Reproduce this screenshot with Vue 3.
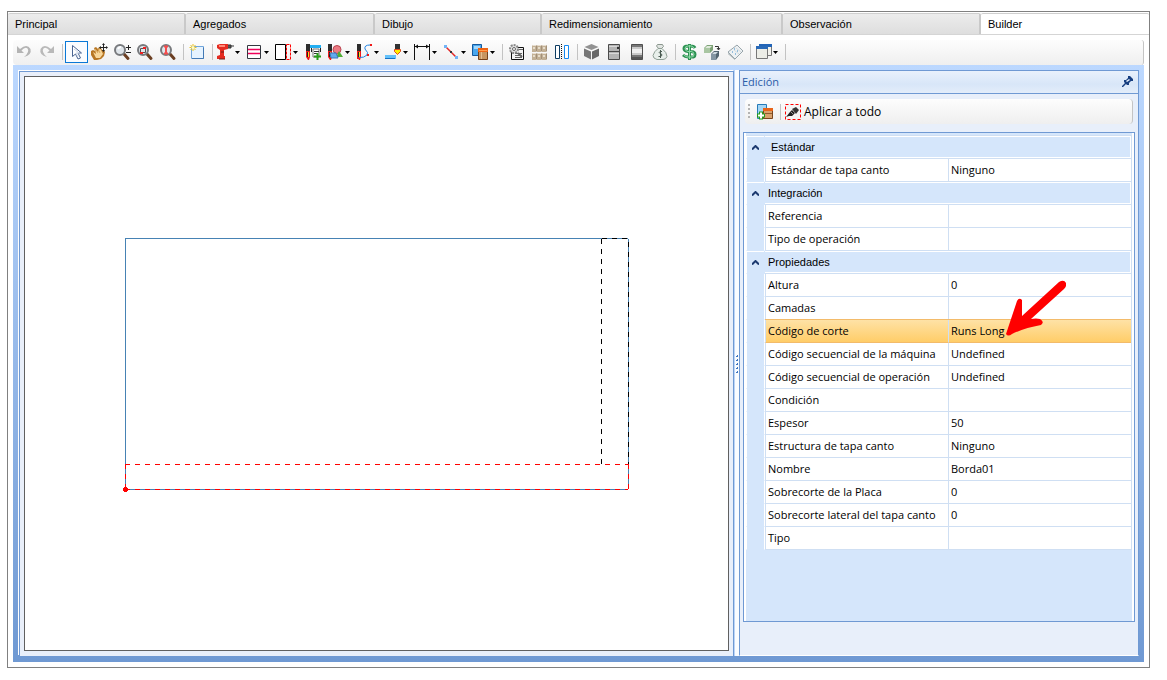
<script setup>
import { ref } from 'vue'

const tabs = [
  { label: 'Principal', size: 'w1' },
  { label: 'Agregados', size: 'w2' },
  { label: 'Dibujo', size: 'w3' },
  { label: 'Redimensionamiento', size: 'w4' },
  { label: 'Observación', size: 'w5' },
  { label: 'Builder', size: 'rest' },
]
const activeTab = ref('Builder')

const lens = (inner) =>
  `<path d="M10 11l4 4.500" stroke="#6b3f22" stroke-width="3" stroke-linecap="round"/><circle cx="6" cy="7" r="5" fill="#dfe5ea" stroke="#77797c" stroke-width="2"/>${inner}`
const cuboid = (x, y) =>
  `<path d="M${x} ${y + 1}l1-1h4v6l-1 1h-4z" fill="#a39078"/><path d="M${x} ${y + 1}h4v6h-4z" fill="#c2b095"/><path d="M${x} ${y + 1}l1-1h4l-1 1z" fill="#e9e0d2"/><path d="M${x + 1} ${y + 2}h2v2h-2z" fill="#e6dccb"/>`
const glue = '<path d="M1 1h4v7h-4z" fill="#2c2c2c"/><path d="M1 8h4v6l-1 3h-1l-2-3z" fill="#f01818"/><path d="M2 9h2v5h-2z" fill="#222"/><path d="M3 9h1v5h-1z" fill="#ffd21c"/>'

const icons = {
  undo: '<path d="M1 3v7h7l-2.500-2.500Q9 3.500 11.500 5.500Q14 9 8 14Q16 12 14.500 6Q11 0 4 6z" fill="#b4b4b4"/>',
  redo: '<path d="M15 3v7h-7l2.500-2.500Q7 3.500 4.500 5.500Q2 9 8 14Q0 12 1.500 6Q5 0 12 6z" fill="#b9b9b9"/>',
  pointer: '<path d="M4.500 2.500v11l3-2.500l2.500 5l2.500-1l-2.500-5h3.500z" fill="#fff" stroke="#4b6592"/><path d="M6 6l5 4h-3l2 4" stroke="#ccd6e7" fill="none"/>',
  hand: '<path d="M0 8l2-1l2 1l-1-3l2-1l2 2l1-2l2 1l1 2l2 0l1 2l-1 4l-3 3l-4 1h-3l-3-5z" fill="#b87724"/><path d="M2 9l3 2l-1-5l3 3l2-4l2 4l1 2l-3 4l-4 0z" fill="#f8d79b"/><path d="M4 6l3 4M7 6l2 4" stroke="#d8a75c"/><path d="M12.500 1v7M9 4.500h7" stroke="#222"/><path d="M11 2l1.500-2L14 2M11 7l1.500 2L14 7M15 3l2 1.500L15 6M10 3L8 4.500L10 6" fill="#222"/>',
  zoom: lens('<path d="M4 6q1-2 3-2" stroke="#fff" stroke-width="2" fill="none"/><path d="M12 4.500h5M14.500 2v5M12 9.500h5" stroke="#222"/>'),
  zoomBox: lens('<path d="M3.500 5.500h5v4h-5z" fill="none" stroke="#555"/><path d="M6 5h3M3 10h3" stroke="#f02020" stroke-width="2"/>'),
  zoomFit: lens('<path d="M6 3v8M4 3.500h4M4 10.500h4" stroke="#f54d4d" stroke-width="2"/>'),
  newDoc: '<path d="M2.500 3.500h12v12h-12z" fill="#e6f3ff" stroke="#70a6dd"/><path d="M3 15.500h11.500v-11" fill="none" stroke="#4379b4"/><path d="M4 1v7M.5 4.500h7M1.500 2l5 5M6.500 2l-5 5" stroke="#edc21d"/><circle cx="4" cy="4.500" r="1.500" fill="#fffbc8"/>',
  drill: '<path d="M0 2l3-1h8v5l-4 1v6h1v3h-8v-3l3-1v-5l-3-2z" fill="#e52b20"/><path d="M2 3h6" stroke="#ff8a78" stroke-width="2"/><path d="M11 2h3v3h-3M14 3h3" fill="#555" stroke="#333"/><path d="M4 9h3M2 16h6" stroke="#6e211b"/>',
  stripes: '<path d="M1.500 2.500h13v13h-13z" fill="#fff" stroke="#343840"/><path d="M2 6.500h12M2 10.500h12" stroke="#f0005a" stroke-width="1.500"/>',
  edge: '<path d="M.5 1.500h10v15h-10z" fill="#fff" stroke="#000"/><path d="M11.500 1.500h4v15h-4z" fill="none" stroke="#f00" stroke-dasharray="3 1"/>',
  gluePlus: glue + '<path d="M5 2h11v3H5z" fill="#22aef2"/><path d="M6.500 5v4M15.500 5v4" stroke="#222"/><path d="M8 6h6v8H8z" fill="#fff" stroke="#777"/><path d="M9 8.500h5M9 10.500h4" stroke="#333"/><path d="M9 13.500h7M12.500 10v7" stroke="#279c18" stroke-width="2"/>',
  glueShapes: glue + '<circle cx="10" cy="6.500" r="4" fill="#ec7a83" stroke="#b94450"/><path d="M9 14l3-6l4 6z" fill="#4fad35"/><path d="M3 10h6l2 5H4z" fill="#62aaf0" stroke="#3878bd"/>',
  glueCurve: glue + '<path d="M14 2q-6 0-5 4q4 4 2 6q-3 3-8 2.500" stroke="#2284e4" fill="none"/><path d="M14 1h2v2h-2zM11 11h2v2h-2zM1 14h2v2H1z" fill="#f01818"/>',
  spread: '<path d="M0 12h11v4H0z" fill="#64c1fa"/><path d="M0 15.500h10" stroke="#1671c4"/><path d="M10 1h5v5h-5z" fill="#333"/><path d="M9.500 6.500h6v2l-3 3l-3-3z" fill="#fff000" stroke="#e04b21"/>',
  dimension: '<path d="M.5 1v16M15.500 1v16M1 3.500h14" stroke="#111"/><path d="M1 3.500l3-2v4zM15 3.500l-3-2v4z" fill="#111"/>',
  line: '<path d="M3 4l10 10" stroke="#e32828" stroke-width="1.500"/><path d="M7 8h2v2H7z" fill="#333"/><path d="M1 2h3v3H1zM12 13h3v3h-3z" fill="#72b4f6"/>',
  panels: '<path d="M.5 1.500h9v11h-9z" fill="#4aa7ee" stroke="#165a9e"/><path d="M2 3h6v3H2z" fill="#a4d8fc"/><path d="M6.500 6.500h9v10h-9z" fill="#c7955f" stroke="#754119"/><path d="M6 5h10v4H6z" fill="#ee6414"/><path d="M7 7.500h8" stroke="#ffa050"/><path d="M9.500 9v7" stroke="#e3bd91"/>',
  gear: '<path d="M3.500 4.500h12v12h-12z" fill="#f4f4f4" stroke="#111"/><path d="M7 10.500h7M7 12.500h7M7 14.500h7M11 6.500h4" stroke="#666"/><circle cx="6" cy="6" r="4" fill="#e2e2e2" stroke="#888" stroke-width="2" stroke-dasharray="2 1"/><circle cx="6" cy="6" r="1.500" fill="#fff" stroke="#666"/><path d="M10 10l4 4" stroke="#666" stroke-width="2"/>',
  boxes: cuboid(1, 2) + cuboid(6, 2) + cuboid(11, 2) + cuboid(1, 10) + cuboid(6, 10) + cuboid(11, 10),
  mirror: '<path d="M1.500 2.500h4v13h-4z" fill="#fff" stroke="#0c3c62"/><path d="M10.500 2.500h4v13h-4z" fill="#fff" stroke="#1389f2"/><path d="M7.500 1v16" stroke="#111" stroke-dasharray="1 1"/>',
  cube: '<path d="M8.500 1l7 3l-7 3l-7-3z" fill="#929292"/><path d="M1 5.500l7 3v8l-7-3.500z" fill="#777"/><path d="M16 5.500l-7 3v8l7-3.500z" fill="#686868"/>',
  cabinet: '<path d="M2.500 1.500h11v15h-11z" fill="#b5b5b5" stroke="#4b4b4b"/><path d="M3 8.500h10" stroke="#4b4b4b"/><path d="M3 3.500h8M3 10.500h10" stroke="#dadada"/><path d="M11 4h2v2h-2z" fill="#333"/>',
  roll: '<path d="M2.500 1.500h11v15h-11z" fill="#777" stroke="#505050"/><path d="M3 4h10v8H3z" fill="#c9c9c9"/><path d="M3 6h10v4H3z" fill="#f0f0f0"/><path d="M3 15h10" stroke="#555" stroke-width="2"/>',
  moneyBag: '<path d="M5.500 1.500h5l1 2l-2 2h-3L4.500 3z" fill="#e1e5e2" stroke="#8b978e"/><path d="M6 5.500h4q5 4 5 8q-1 3-4 3h-6q-4-1-4-4q1-4 5-7z" fill="#e8efeb" stroke="#90a096"/><path d="M10 8.500H8q-1.500 1 0 2h1q2 1.500 0 3H6.500M8.500 7v8" stroke="#4b5b52" fill="none"/>',
  dollar: '<path d="M14 5q-1-2-4-2H7q-4 0-4 2.500T7 8.500h3q4 0 4 3T10 14H7q-3 0-5-2M8.500 1v16" stroke="#2d9152" stroke-width="3" fill="none"/><path d="M13 5q-1-2-3-2H7q-3 0-3 2.500T7 8.500h3q3 0 3 3T10 14H7q-2 0-4-2M8.500 2v14" stroke="#8bd8a5" stroke-width="1" fill="none"/>',
  cubes: '<path d="M0 5l3-3h6v5l-3 3H0z" fill="#7da276"/><path d="M0 5h6v5H0z" fill="#a9c6a2"/><path d="M1 5l2-2h5L6 5z" fill="#dfeadb"/><path d="M7 11l3-3h5v5l-3 4H7z" fill="#536570"/><path d="M7 11h5v6H7z" fill="#8496a2"/><path d="M8 11l2-2h4l-2 2z" fill="#ced9df"/><path d="M11 3.500h3.500v3M13 5l1.500 2L16 5" stroke="#333" fill="none"/>',
  book: '<path d="M1 9l9-7l6 6l-8 8z" fill="#edf1f3" stroke="#98a5ab"/><path d="M1 10l7 6v1L1 11z" fill="#9eabaf"/><path d="M9 5l5 4M7 7l5 4" stroke="#d3dbdf"/><path d="M7 6h1M8 11h1M5 9h1M10 8h1" stroke="#3a8bc8"/>',
  windows: '<path d="M4.500 1.500h12v11h-12z" fill="#f2f2ed" stroke="#777"/><path d="M4 2.500h13" stroke="#2164b7" stroke-width="3"/><path d="M1.500 3.500h11v12h-11z" fill="#ecede7" stroke="#777"/><path d="M1 4.500h12" stroke="#2869b7" stroke-width="3"/>',
  addPanel: '<path d="M1.500 1.500h9v14h-9z" fill="#a5d6f5" stroke="#267bb8"/><path d="M7.500 5.500h9v10h-9z" fill="#d8a16c" stroke="#7a461d"/><path d="M7 5h10v3H7z" fill="#e96418"/><path d="M9 10.500h7" stroke="#8f5b2e"/><path d="M1 12.500h8M5 8.500v8" stroke="#249b19" stroke-width="4"/><path d="M2 12.500h6M5 9.500v6" stroke="#fff" stroke-width="2"/>',
  brush: '<path d="M.5 1.500h15v15h-15z" fill="#f4f4f4" stroke="#f00" stroke-dasharray="3 2"/><path d="M1 14l4-5l2-2l3 3l-3 3l-3 0z" fill="#222"/><path d="M7 6l4-2l3 3l-3 4z" fill="#333"/><path d="M6 9l2 2" stroke="#999"/>',
}

const groups = [
  [{ i: 'undo', t: 'Deshacer' }, { i: 'redo', t: 'Rehacer' }],
  [{ i: 'pointer', t: 'Seleccionar', on: true }, { i: 'hand', t: 'Mover' }, { i: 'zoom', t: 'Zoom' }, { i: 'zoomBox', t: 'Zoom ventana' }, { i: 'zoomFit', t: 'Zoom total' }],
  [{ i: 'newDoc', t: 'Nuevo' }],
  [
    { i: 'drill', t: 'Taladro', m: true }, { i: 'stripes', t: 'Ranuras', m: true }, { i: 'edge', t: 'Tapa canto', m: true },
    { i: 'gluePlus', t: 'Agregar mecanizado' }, { i: 'glueShapes', t: 'Formas', m: true }, { i: 'glueCurve', t: 'Curvas', m: true },
    { i: 'spread', t: 'Perfil', m: true }, { i: 'dimension', t: 'Cota', m: true }, { i: 'line', t: 'Línea', m: true }, { i: 'panels', t: 'Piezas', m: true },
  ],
  [{ i: 'gear', t: 'Configurar' }, { i: 'boxes', t: 'Módulos' }, { i: 'mirror', t: 'Espejar' }],
  [{ i: 'cube', t: 'Volumen' }, { i: 'cabinet', t: 'Mueble' }, { i: 'roll', t: 'Material' }, { i: 'moneyBag', t: 'Costo' }],
  [{ i: 'dollar', t: 'Precio' }, { i: 'cubes', t: 'Reemplazar' }, { i: 'book', t: 'Informe' }],
  [{ i: 'windows', t: 'Ventanas', m: true }],
]

const rows = [
  { cat: 'Estándar', inset: true },
  { name: 'Estándar de tapa canto', value: 'Ninguno', inset: true },
  { cat: 'Integración' },
  { name: 'Referencia', value: '' },
  { name: 'Tipo de operación', value: '' },
  { cat: 'Propiedades' },
  { name: 'Altura', value: '0' },
  { name: 'Camadas', value: '' },
  { name: 'Código de corte', value: 'Runs Long', selected: true },
  { name: 'Código secuencial de la máquina', value: 'Undefined' },
  { name: 'Código secuencial de operación', value: 'Undefined' },
  { name: 'Condición', value: '' },
  { name: 'Espesor', value: '50' },
  { name: 'Estructura de tapa canto', value: 'Ninguno' },
  { name: 'Nombre', value: 'Borda01' },
  { name: 'Sobrecorte de la Placa', value: '0' },
  { name: 'Sobrecorte lateral del tapa canto', value: '0' },
  { name: 'Tipo', value: '' },
]
</script>

<template>
  <div class="page">
    <main class="window">
      <nav class="tabs">
        <button
          v-for="tab in tabs"
          :key="tab.label"
          type="button"
          class="tab"
          :class="[tab.size, { active: tab.label === activeTab }]"
          @click="activeTab = tab.label"
        >{{ tab.label }}</button>
      </nav>

      <div class="toolbar">
        <div v-for="(group, g) in groups" :key="g" class="group">
          <button
            v-for="tool in group"
            :key="tool.i"
            type="button"
            class="tool"
            :class="{ menu: tool.m, on: tool.on }"
            :aria-label="tool.t"
          >
            <svg class="icon" viewBox="0 0 17 18" fill="none" v-html="icons[tool.i]"></svg>
            <svg v-if="tool.m" class="caret" viewBox="0 0 5 3"><path d="M0 0h5L2.500 3z" fill="#000" /></svg>
          </button>
        </div>
      </div>

      <div class="workspace">
        <section class="drawing">
          <div class="canvas">
            <svg viewBox="0 0 704 573" fill="none" shape-rendering="crispEdges">
              <path d="M100.500 161.500h503.500v251h-503.500z" stroke="#4682b4" />
              <path d="M577.500 161.500H604V387M577.500 387V161.500" stroke="#000" stroke-dasharray="5 5" />
              <path d="M100.500 387.500H604M100.500 412.500H604M100.500 387.500v25M604 387.500v25" stroke="#f00" stroke-dasharray="5 5" />
              <path d="M99 410h3v1h1v3h-1v1h-3v-1h-1v-3h1z" fill="#f00" />
            </svg>
          </div>
        </section>

        <div class="splitter"><span v-for="n in 5" :key="n" class="grip"></span></div>

        <aside class="panel">
          <header class="panel-head">
            <h2>Edición</h2>
            <button type="button" class="pin" aria-label="Fijar panel">
              <svg viewBox="0 0 11 11"><path d="M6 0h2l3 3v2H9L7 7v2H5L4 8L1 11H0v-1l3-3l-1-1V4h2l2-2z" fill="#173e80" /><path d="M4 5l3-2l1 1l-3 2z" fill="#e6effa" /></svg>
            </button>
          </header>

          <div class="panel-tools">
            <span class="handle"></span>
            <button type="button" class="tool" aria-label="Agregar pieza">
              <svg class="icon" viewBox="0 0 17 18" fill="none" v-html="icons.addPanel"></svg>
            </button>
            <span class="divider"></span>
            <button type="button" class="apply">
              <svg class="icon" viewBox="0 0 17 18" fill="none" v-html="icons.brush"></svg>
              Aplicar a todo
            </button>
          </div>

          <div class="grid">
            <table>
              <colgroup><col class="gutter-col" /><col /><col /></colgroup>
              <tbody>
                <tr v-for="row in rows" :key="row.cat || row.name" :class="{ category: row.cat, selected: row.selected, inset: row.inset }">
                  <template v-if="row.cat">
                    <td class="gutter">
                      <svg class="chevron" viewBox="0 0 7 5"><path d="M0 4.500L3.500 1L7 4.500" fill="none" stroke="#1c3a70" stroke-width="2" /></svg>
                    </td>
                    <th colspan="2" scope="rowgroup">{{ row.cat }}</th>
                  </template>
                  <template v-else>
                    <td class="gutter"></td>
                    <th scope="row" class="name">{{ row.name }}</th>
                    <td class="value">
                      {{ row.value }}
                      <svg v-if="row.selected" class="arrow" viewBox="0 0 62 58">
                        <path d="M2 55L13 22Q15 18 18 21L18 37L55 3Q60 0 62 4Q63 7 60 10L27 40Q32 39 36 40Q41 43 37 46Q20 49 8 55Q4 58 2 55z" fill="#f00" />
                      </svg>
                    </td>
                  </template>
                </tr>
              </tbody>
            </table>
          </div>
        </aside>
      </div>
    </main>
  </div>
</template>

<style>
body { margin: 0; background: #fff; }
</style>

<style scoped>
* { box-sizing: border-box; }
button { margin: 0; padding: 0; border: 0; background: none; font: inherit; color: inherit; }
.page {
  display: flex;
  min-height: 100vh;
  padding: 11px 17px 12px 7px;
  font-family: "Open Sans", "Noto Sans", sans-serif;
  font-size: 11px;
  color: #000;
}
.window { flex: 1; min-width: 0; display: flex; flex-direction: column; border: 1px solid #808080; padding-bottom: 5px; }

.tabs { display: flex; height: 23px; padding-top: 1px; border-bottom: 1px solid #d5d5d5; font-family: "Liberation Sans", Arial, sans-serif; }
.tab {
  padding-left: 7px;
  text-align: left;
  background: linear-gradient(#ececec, #dedede);
  border-top: 1px solid #cfcfcf;
  border-right: 2px solid #c9c9c9;
  border-radius: 2px 2px 0 0;
}
.w1 { width: 178px; }
.w2 { width: 189px; }
.w3 { width: 167px; }
.w4 { width: 241px; }
.w5 { width: 198px; }
.rest { flex: 1; }
.tab.active { background: #fff; border-right: 0; }

.toolbar {
  display: flex;
  height: 25px;
  margin: 5px 5px 0;
  padding-top: 1px;
  background: linear-gradient(#fdfdfd, #efefef);
  border-right: 1px solid #c4c4c4;
  border-radius: 4px 3px 3px 4px;
}
.group { display: flex; height: 22px; }
.group::after { content: ""; width: 1px; height: 16px; margin: 3px 2px 0 3px; background: #c3c3c3; }
.tool { display: flex; align-items: center; width: 23px; height: 22px; padding-left: 3px; }
.tool.menu { width: 29px; padding-left: 2px; }
.tool.on { padding-left: 2px; border: 1px solid #0a78d6; background: #fafcff; }
.icon { display: block; flex: none; width: 17px; height: 18px; }
.caret { flex: none; width: 5px; height: 3px; margin-left: 1px; }

.workspace {
  flex: 1;
  display: flex;
  margin: 0 5px;
  padding: 5px 5px 6px;
  background: linear-gradient(#bcd8ff, #6f99d3);
}
.drawing {
  flex: 1;
  min-width: 0;
  display: flex;
  margin: 1px 0 0 1px;
  padding: 4px 4px 5px;
  background: #e9effa;
  border: 1px solid #6f99d3;
  border-bottom: 0;
  box-shadow: -1px -1px #fff;
}
.canvas { flex: 1; min-width: 0; position: relative; background: #fff; border: 1px solid #606060; }
.canvas svg { position: absolute; inset: 0; width: 100%; height: 100%; }

.splitter { width: 5px; display: flex; flex-direction: column; align-items: center; justify-content: center; gap: 1px; background: #fafcff; border-left: 1px solid #bcd4f6; }
.grip { width: 2px; height: 3px; background: linear-gradient(135deg, transparent 50%, #3f74c0 50%); }

.panel { width: 400px; display: flex; flex-direction: column; background: #e8effa; border: 1px solid #6f99d3; border-bottom: 1px solid #fff; }
.panel-head { display: flex; align-items: center; justify-content: space-between; height: 23px; padding: 0 5px 2px 2px; background: linear-gradient(#e9f1fc, #d8e6f8 60%, #e3edfa); border-bottom: 1px solid #6f99d3; }
.panel-head h2 { margin: 0; font-size: 11px; font-weight: 400; color: #2a5ca8; }
.pin, .pin svg { display: block; width: 11px; height: 11px; }
.panel-tools { display: flex; align-items: center; height: 25px; margin: 5px 5px 8px; background: linear-gradient(#fdfdfd, #efefef); border-right: 1px solid #c4c4c4; border-radius: 4px; }
.handle { width: 2px; height: 16px; margin: 0 3px; background: repeating-linear-gradient(#b4b4b4 0 2px, transparent 2px 4px); }
.divider { width: 1px; height: 16px; margin: 0 4px; background: #c3c3c3; }
.apply { display: flex; align-items: center; gap: 2px; font-size: 12px; }

.grid { flex: 1; margin: 0 3px 33px; padding: 2px 2px 0; background: linear-gradient(#d5e6fb, #d5e6fb) 2px 0 / calc(100% - 4px) 100% no-repeat #fff; border: 1px solid #6f99d3; }
table { width: 100%; table-layout: fixed; border-collapse: separate; border-spacing: 0; background: #fff; border-top: 1px solid #cfdff3; border-right: 1px solid #cfdff3; }
.gutter-col { width: 19px; }
th, td { height: 23px; padding: 0 0 0 2px; text-align: left; font-weight: 400; line-height: 22px; white-space: nowrap; border-bottom: 1px solid #cfdff3; }
.gutter { padding: 0; background: #d5e6fb; border-bottom-color: #d5e6fb; border-left: 1px solid #fff; border-right: 1px solid #fff; }
.name, .value { border-left: 1px solid #cfdff3; }
.category th { padding-left: 3px; background: #d5e6fb; box-shadow: inset 0 1px #fff, inset 0 -1px #fff, inset -1px 0 #fff; font-family: "Liberation Sans", Arial, sans-serif; }
.category .gutter { border-right-color: #d5e6fb; box-shadow: inset 0 1px #fff; }
.inset .name { padding-left: 5px; }
.category.inset th { padding-left: 6px; }
.chevron { display: block; width: 7px; height: 5px; margin-left: 5px; }
.selected .name, .selected .value { background: linear-gradient(#fee2a6, #ffcd68); border-bottom-color: #f3bb6a; box-shadow: 0 -1px #f3bb6a; }
.value { position: relative; }
.arrow { position: absolute; left: 55px; top: -41px; width: 62px; height: 58px; z-index: 1; }
</style>
